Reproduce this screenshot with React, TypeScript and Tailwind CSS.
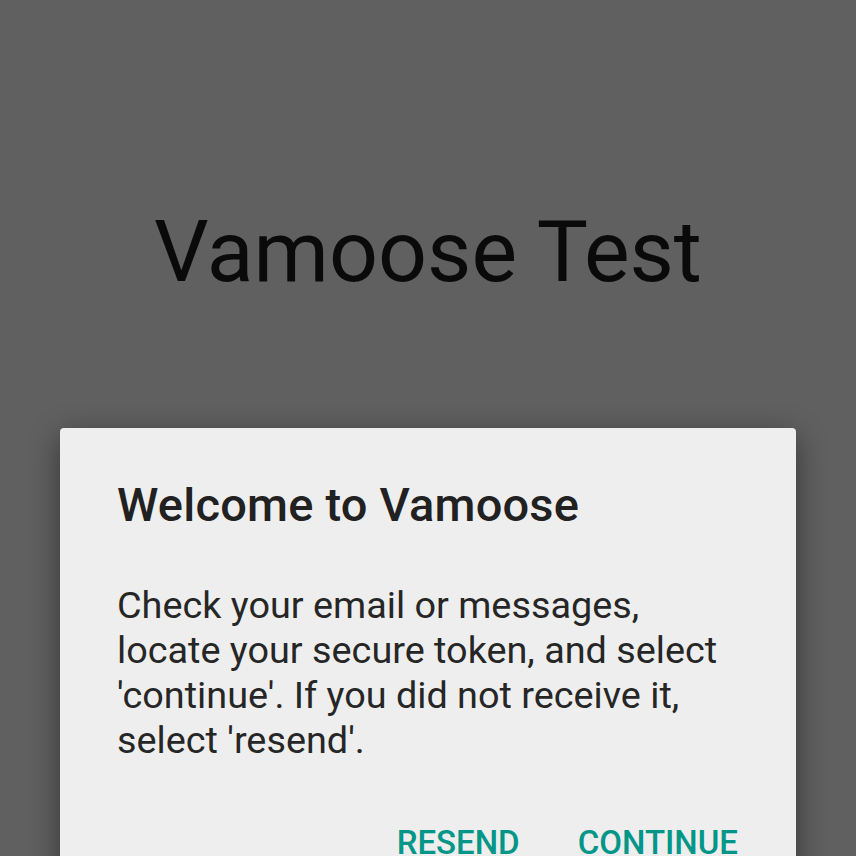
import React from "react";

const App: React.FC = () => {
  return (
    <div className="w-full h-[856px] overflow-hidden bg-[#606060] flex flex-col items-center font-['Roboto',sans-serif]">
      {/* App title behind the dialog scrim */}
      <h1 className="mt-[202px] text-[86px] leading-[100px] font-normal text-[#0a0a0a]">
        Vamoose Test
      </h1>

      {/* Dialog */}
      <div className="mt-[126px] w-[736px] bg-[#eeeeee] rounded-[4px] shadow-[0_8px_30px_rgba(0,0,0,0.45)] pt-[49px] pl-[57px] pr-[58px] pb-[40px]">
        <h2 className="text-[47px] leading-[56px] font-medium tracking-[0.2px] text-[#212121]">
          Welcome to Vamoose
        </h2>
        <p className="mt-[50px] text-[37.8px] leading-[45px] text-[#262626]">
          Check your email or messages, locate your secure token, and select
          'continue'. If you did not receive it, select 'resend'.
        </p>
        <div className="mt-[60px] flex justify-end gap-[58px]">
          <button className="text-[33px] leading-[40px] font-medium text-[#009688]">
            RESEND
          </button>
          <button className="text-[33px] leading-[40px] font-medium text-[#009688]">
            CONTINUE
          </button>
        </div>
      </div>
    </div>
  );
};

export default App;
